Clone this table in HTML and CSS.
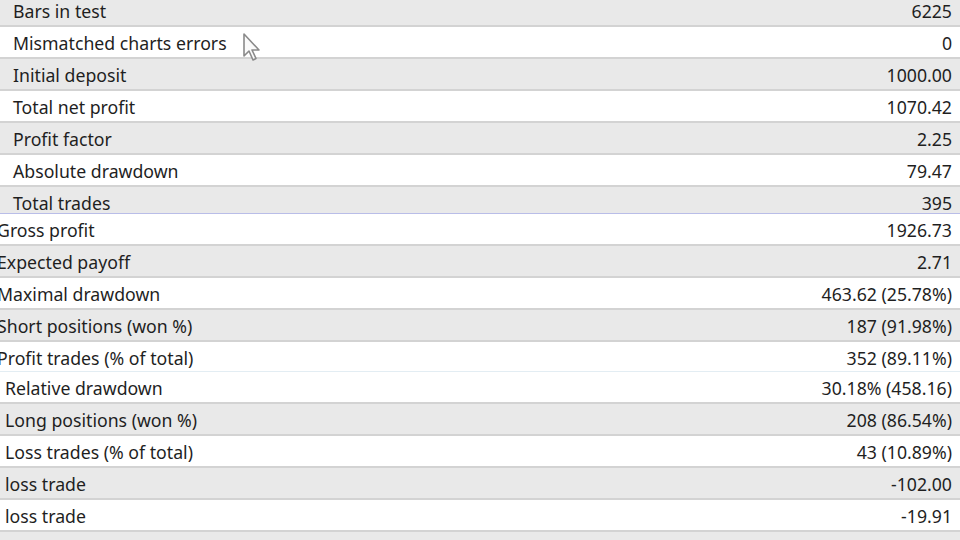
FILE: index.html
```html
<!DOCTYPE html>
<html>
<head>
<meta charset="utf-8">
<link rel="stylesheet" href="styles.css">
</head>
<body>
<div class="report">
  <div class="section sec-a">
    <div class="row grey"><span class="label">Bars in test</span><span class="value">6225</span></div>
    <div class="row white"><span class="label">Mismatched charts errors</span><span class="value">0</span></div>
    <div class="row grey"><span class="label">Initial deposit</span><span class="value">1000.00</span></div>
    <div class="row white"><span class="label">Total net profit</span><span class="value">1070.42</span></div>
    <div class="row grey"><span class="label">Profit factor</span><span class="value">2.25</span></div>
    <div class="row white"><span class="label">Absolute drawdown</span><span class="value">79.47</span></div>
    <div class="row grey last-a"><span class="label">Total trades</span><span class="value">395</span></div>
  </div>
  <div class="section sec-b">
    <div class="row white"><span class="label">Gross profit</span><span class="value">1926.73</span></div>
    <div class="row grey"><span class="label">Expected payoff</span><span class="value">2.71</span></div>
    <div class="row white"><span class="label">Maximal drawdown</span><span class="value">463.62 (25.78%)</span></div>
    <div class="row grey"><span class="label">Short positions (won %)</span><span class="value">187 (91.98%)</span></div>
    <div class="row white last-b"><span class="label">Profit trades (% of total)</span><span class="value">352 (89.11%)</span></div>
  </div>
  <div class="section sec-c">
    <div class="row white"><span class="label">Relative drawdown</span><span class="value">30.18% (458.16)</span></div>
    <div class="row grey"><span class="label">Long positions (won %)</span><span class="value">208 (86.54%)</span></div>
    <div class="row white"><span class="label">Loss trades (% of total)</span><span class="value">43 (10.89%)</span></div>
    <div class="row grey"><span class="label">loss trade</span><span class="value">-102.00</span></div>
    <div class="row white"><span class="label">loss trade</span><span class="value">-19.91</span></div>
    <div class="row grey"><span class="label">Maximal consecutive loss (count of losses)</span><span class="value">2 (-102.00)</span></div>
  </div>
  <svg class="cursor" width="22" height="32" viewBox="0 0 22 32">
    <path d="M2 2 L2 24 L7 19 L11 28 L14 26.5 L10 18 L17 18 Z" fill="#fafafa" stroke="#8a8a8a" stroke-width="1.6" stroke-linejoin="round"/>
  </svg>
</div>
</body>
</html>
```
FILE: styles.css
```css
html, body {
  margin: 0;
  padding: 0;
  background: #ffffff;
  overflow: hidden;
}
body {
  width: 960px;
  height: 540px;
  font-family: "Noto Sans", "Open Sans", sans-serif;
  font-size: 17.7px;
  color: #1f1f1f;
}
.report {
  position: relative;
  width: 960px;
  height: 540px;
  overflow: hidden;
}
.section {
  display: flex;
  flex-direction: column;
}
.sec-a {
  margin-top: -5px;
}
.sec-a .row {
  padding-left: 13px;
}
.sec-b .row {
  padding-left: 0;
}
.sec-b .label {
  margin-left: -3px;
}
.sec-c .row {
  padding-left: 5px;
}
.row {
  height: 32px;
  box-sizing: border-box;
  display: flex;
  align-items: center;
  justify-content: space-between;
  padding-top: 2px;
  padding-right: 8px;
  border-bottom: 2px solid #d3d3d3;
  white-space: nowrap;
}
.grey {
  background: #e9e9e9;
}
.white {
  background: #ffffff;
}
.row.last-a {
  height: 27px;
  padding-top: 5px;
  border-bottom: 1px solid #b9bde8;
}
.row.last-b {
  height: 30px;
  padding-top: 3px;
  border-bottom: 1px solid #e3edf3;
}
.cursor {
  position: absolute;
  left: 242px;
  top: 32px;
}
```
